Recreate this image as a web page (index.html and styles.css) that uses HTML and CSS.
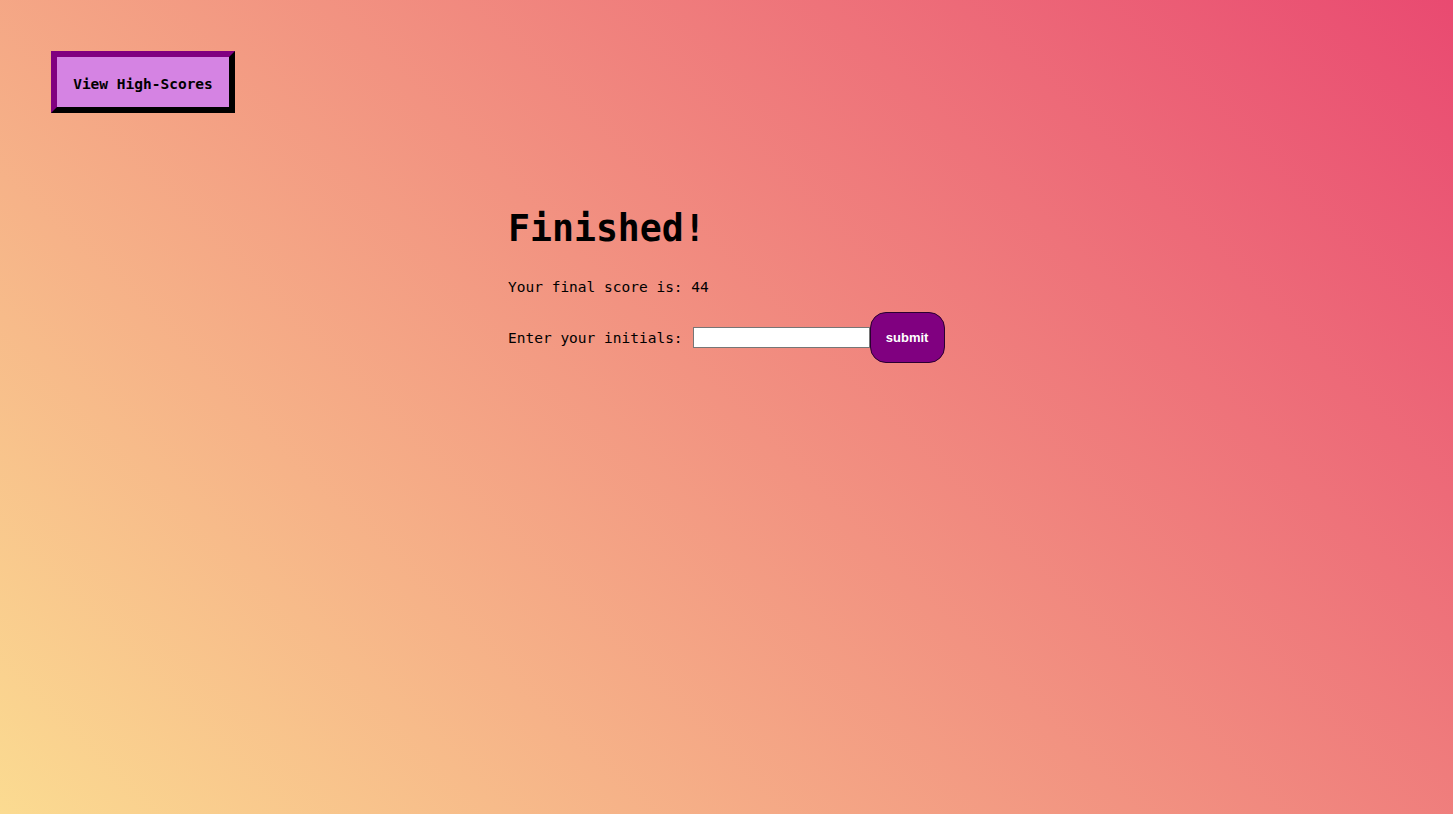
FILE: index.html
```html
<!DOCTYPE html>
<html lang="en">
<head>
<meta charset="utf-8">
<title>Quiz</title>
<link rel="stylesheet" href="styles.css">
</head>
<body>
<header class="top-bar">
  <button class="scores-btn" type="button">View High-Scores</button>
</header>
<main class="content">
  <h1 class="title">Finished!</h1>
  <p class="score">Your final score is: 44</p>
  <form class="initials-form">
    <label class="initials-label" for="initials">Enter your initials:</label>
    <input class="initials-input" id="initials" type="text">
    <button class="submit-btn" type="button">submit</button>
  </form>
</main>
</body>
</html>
```

FILE: styles.css
```css
html, body {
  margin: 0;
  padding: 0;
}

body {
  min-height: 100vh;
  background: linear-gradient(45deg, #fbdb91 0%, #e94a71 100%);
  font-family: "DejaVu Sans Mono", "Liberation Mono", monospace;
  color: #000;
}

.top-bar {
  padding: 51px 0 0 51px;
}

.scores-btn {
  width: 184px;
  height: 62px;
  border: 6px outset #800080;
  border-color: #800080 #330033 #330033 #800080;
  background: #d583e3;
  font-family: "DejaVu Sans Mono", monospace;
  font-weight: bold;
  font-size: 14.5px;
  color: #000;
  padding: 3px 0 0;
}

.content {
  padding-left: 508px;
  padding-top: 90px;
}

.title {
  margin: 0;
  font-size: 36.5px;
  font-weight: bold;
  line-height: 52px;
}

.score {
  margin: 22px 0 0;
  font-size: 14.5px;
  line-height: 20px;
}

.initials-form {
  display: flex;
  align-items: center;
  margin-top: 15px;
}

.initials-label {
  font-size: 14.5px;
  line-height: 20px;
  margin-right: 10px;
}

.initials-input {
  width: 177px;
  height: 21px;
  box-sizing: border-box;
  border: 1px solid #767676;
  background: #fff;
  padding: 1px 2px;
  margin: 0;
}

.submit-btn {
  width: 75px;
  height: 51px;
  box-sizing: border-box;
  border: 1px solid #2a0030;
  border-radius: 16px;
  background: #800080;
  color: #fff;
  font-family: "Liberation Sans", Arial, sans-serif;
  font-weight: bold;
  font-size: 13px;
  padding: 0;
}
```
